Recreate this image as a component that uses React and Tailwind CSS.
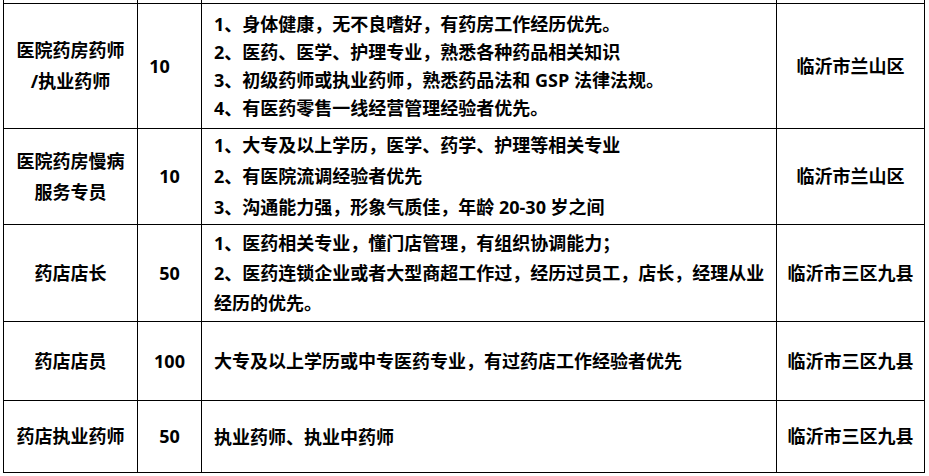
const rows = [
  {
    title: ['医院药房药师', '/执业药师'],
    count: '10',
    countPad: 'pr-5',
    lines: [
      '1、身体健康，无不良嗜好，有药房工作经历优先。',
      '2、医药、医学、护理专业，熟悉各种药品相关知识',
      '3、初级药师或执业药师，熟悉药品法和 GSP 法律法规。',
      '4、有医药零售一线经营管理经验者优先。',
    ],
    lead: 'leading-[28px]',
    place: '临沂市兰山区',
  },
  {
    title: ['医院药房慢病', '服务专员'],
    count: '10',
    countPad: '',
    lines: [
      '1、大专及以上学历，医学、药学、护理等相关专业',
      '2、有医院流调经验者优先',
      '3、沟通能力强，形象气质佳，年龄 20-30 岁之间',
    ],
    lead: 'leading-[31px]',
    place: '临沂市兰山区',
  },
  {
    title: ['药店店长'],
    count: '50',
    countPad: '',
    lines: [
      '1、医药相关专业，懂门店管理，有组织协调能力；',
      '2、医药连锁企业或者大型商超工作过，经历过员工，店长，经理从业',
      '经历的优先。',
    ],
    lead: 'leading-[30px]',
    place: '临沂市三区九县',
  },
  {
    title: ['药店店员'],
    count: '100',
    countPad: '',
    lines: ['大专及以上学历或中专医药专业，有过药店工作经验者优先'],
    lead: 'leading-[30px]',
    place: '临沂市三区九县',
  },
  {
    title: ['药店执业药师'],
    count: '50',
    countPad: '',
    lines: ['执业药师、执业中药师'],
    lead: 'leading-[30px]',
    place: '临沂市三区九县',
  },
]

const cell = 'border-r border-b border-black flex items-center'

export default function App() {
  return (
    <div
      className="w-[929px] h-[476px] bg-white text-black font-bold text-[18px] pl-[3px] overflow-hidden"
      style={{ fontFamily: '"Open Sans", "Noto Sans CJK SC", sans-serif' }}
    >
      {/* stub of the row above */}
      <div className="grid grid-cols-[134px_64px_575px_148px] h-[3px] border-l border-black w-max">
        <div className="border-r border-black" />
        <div className="border-r border-black" />
        <div className="border-r border-black" />
        <div className="border-r border-black" />
      </div>

      {/* table */}
      <div className="grid grid-cols-[134px_64px_575px_148px] grid-rows-[125px_96px_97px_79px_72px] border-l border-t border-black w-max">
        {rows.map((r) => (
          <div key={r.title.join('')} className="contents">
            <div className={`${cell} justify-center text-center leading-[31px]`}>
              <div>
                {r.title.map((t) => (
                  <div key={t} className="whitespace-nowrap">{t}</div>
                ))}
              </div>
            </div>
            <div className={`${cell} justify-center ${r.countPad}`}>{r.count}</div>
            <div className={`${cell} pl-3 ${r.lead}`}>
              <div>
                {r.lines.map((l) => (
                  <div key={l} className="whitespace-nowrap">{l}</div>
                ))}
              </div>
            </div>
            <div className={`${cell} justify-center whitespace-nowrap`}>{r.place}</div>
          </div>
        ))}
      </div>
    </div>
  )
}
